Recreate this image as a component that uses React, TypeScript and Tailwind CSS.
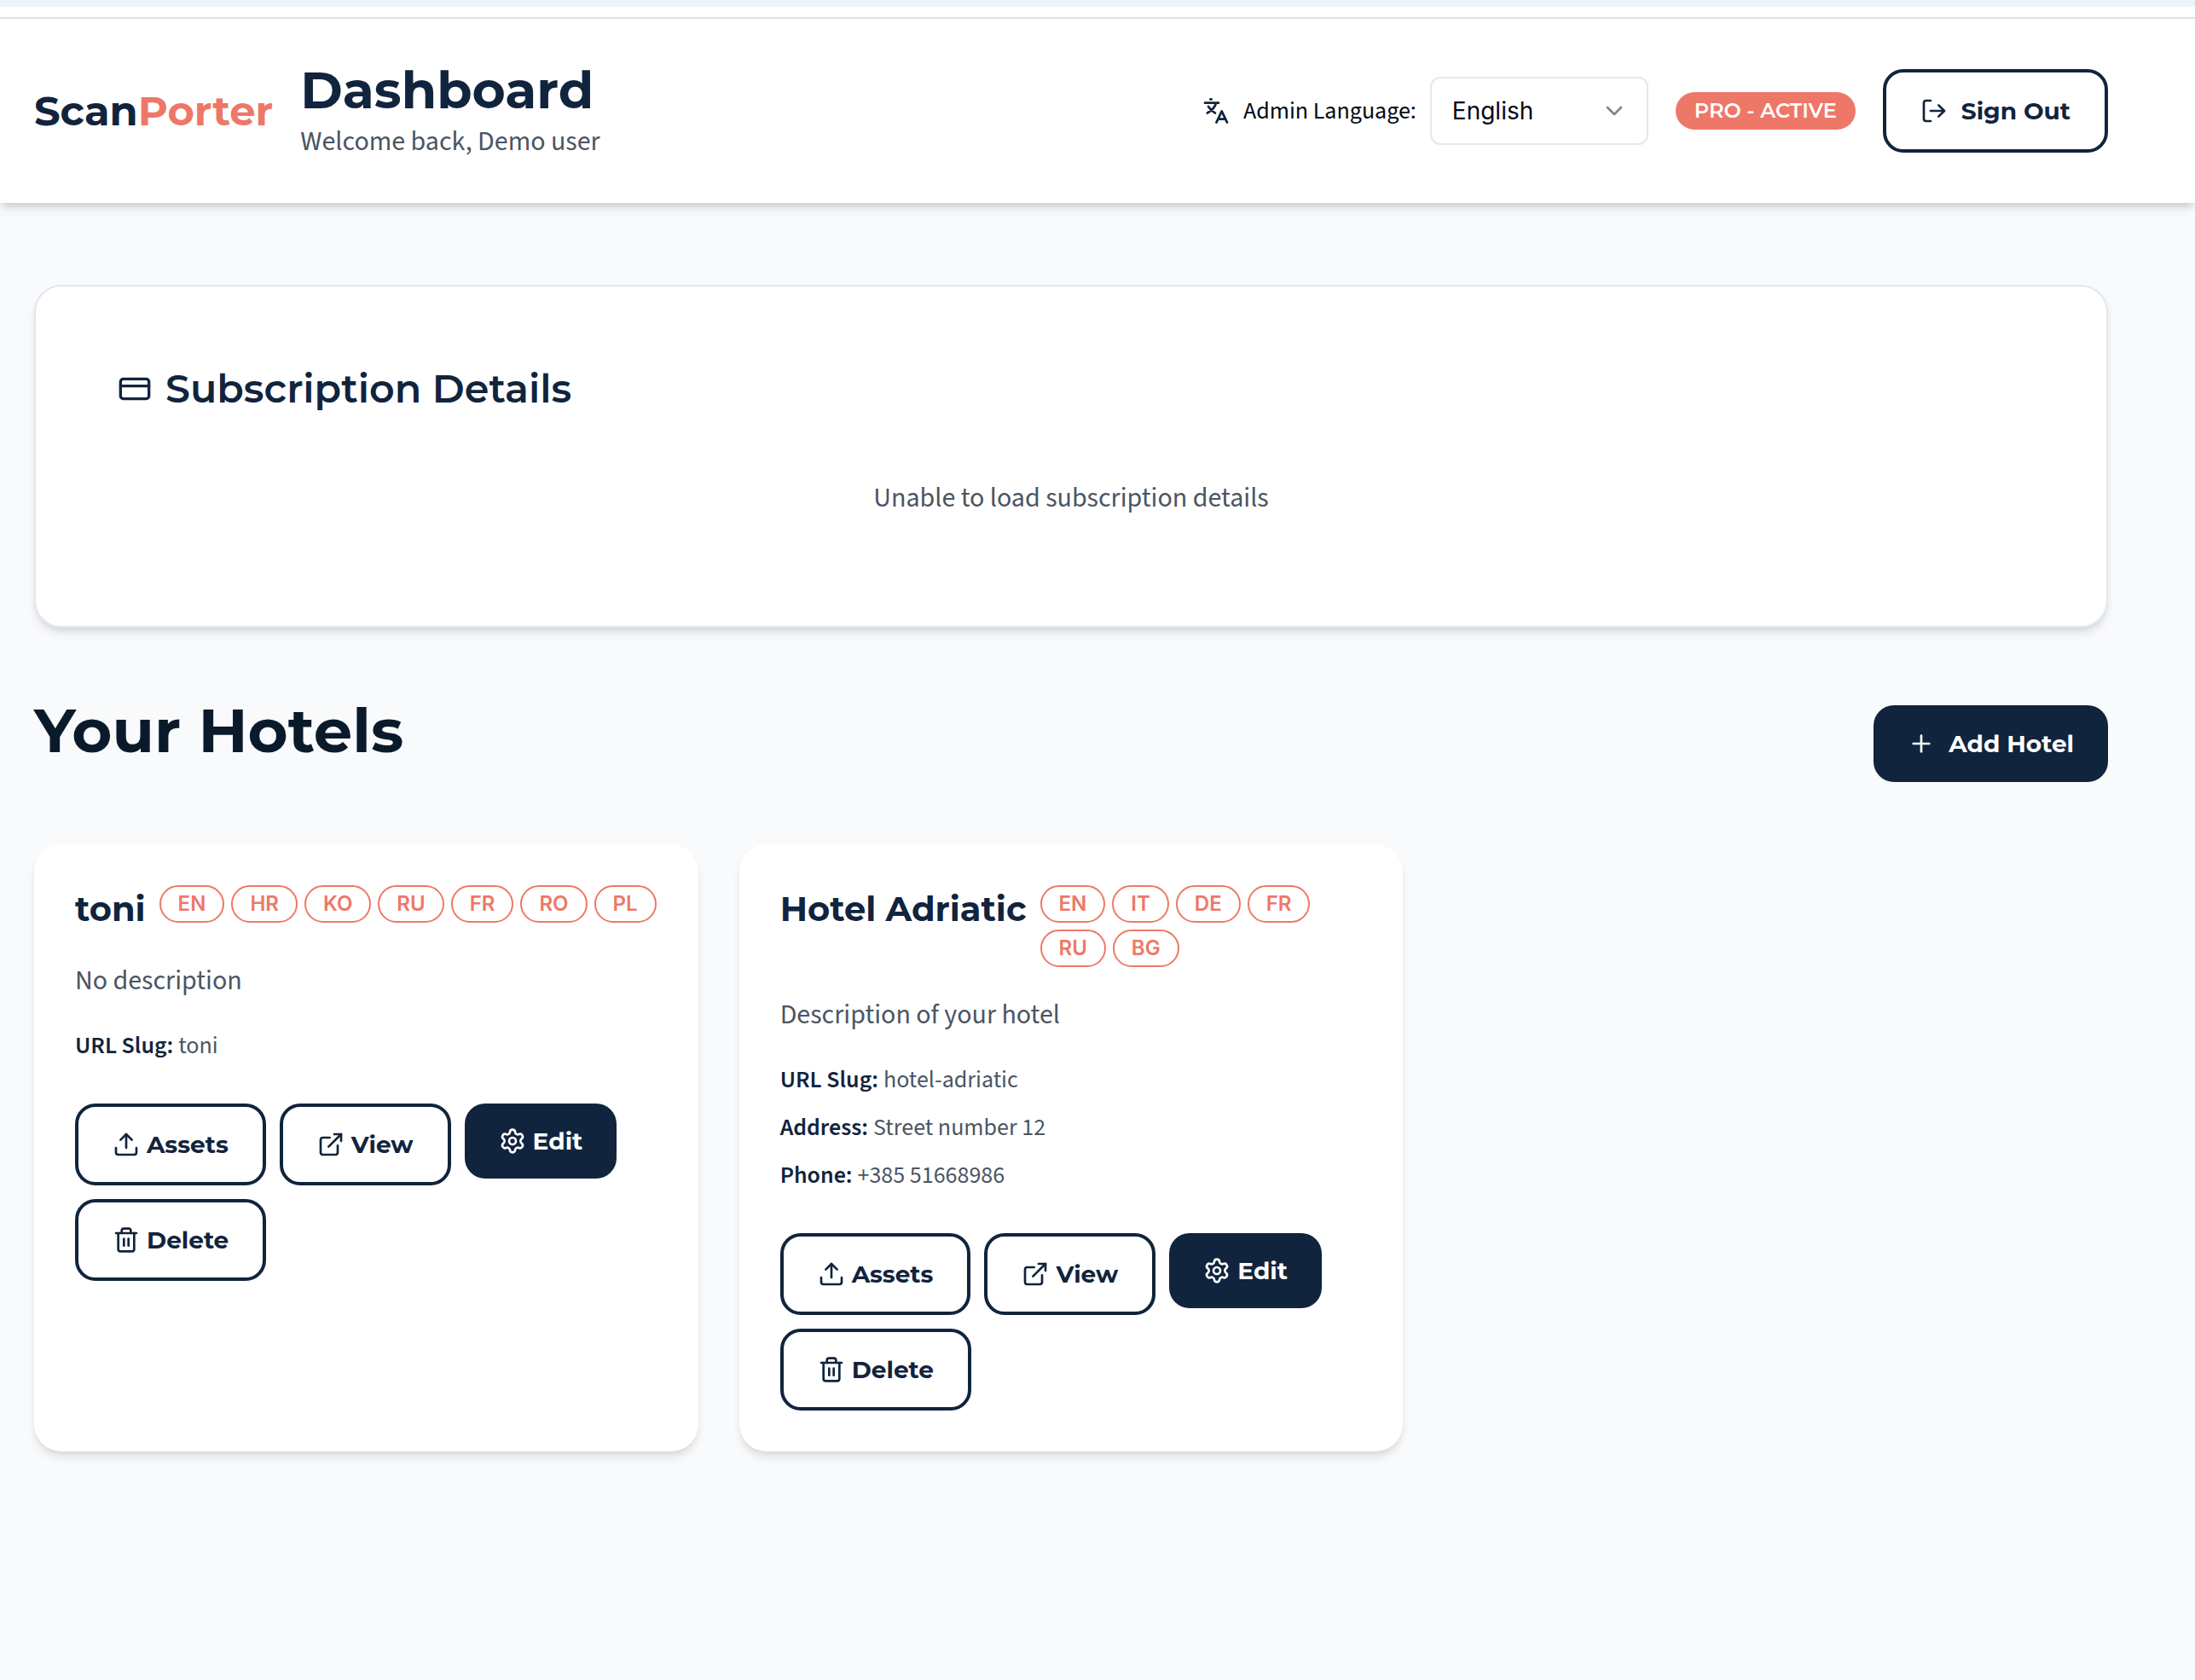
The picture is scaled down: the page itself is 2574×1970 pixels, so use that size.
import type { ReactNode } from "react";
import { ChevronDown, CreditCard, ExternalLink, LogOut, Plus, Settings, Trash2, Upload } from "lucide-react";

const heading = "font-['Montserrat','Inter',sans-serif]";
const cardShadow = "shadow-[0_8px_12px_-2px_rgba(0,0,0,0.1),0_4px_8px_-4px_rgba(0,0,0,0.1)]";

interface Hotel {
  name: string;
  languages: string[];
  description: string;
  details: { label: string; value: string }[];
}

const hotels: Hotel[] = [
  {
    name: "toni",
    languages: ["EN", "HR", "KO", "RU", "FR", "RO", "PL"],
    description: "No description",
    details: [{ label: "URL Slug:", value: "toni" }],
  },
  {
    name: "Hotel Adriatic",
    languages: ["EN", "IT", "DE", "FR", "RU", "BG"],
    description: "Description of your hotel",
    details: [
      { label: "URL Slug:", value: "hotel-adriatic" },
      { label: "Address:", value: "Street number 12" },
      { label: "Phone:", value: "+385 51668986" },
    ],
  },
];

function TranslateIcon() {
  return (
    <svg
      viewBox="0 0 32 32"
      fill="none"
      stroke="currentColor"
      strokeWidth="2.7"
      strokeLinecap="round"
      strokeLinejoin="round"
      className="size-8 shrink-0 text-[#11243d]"
      aria-hidden="true"
    >
      <path d="M9.4 2.4h1.2M3 6.7h16M16 7c-1.500 5-5.500 9-10.200 11.500M7 11c2 3.200 4.700 5.600 8 7.600" />
      <path d="m16.400 29.600 6.300-13.200 6.300 13.200M18.500 25.600h8.400" />
    </svg>
  );
}

interface ButtonProps {
  variant?: "outline" | "solid";
  className: string;
  children: ReactNode;
}

function Button({ variant = "outline", className, children }: ButtonProps) {
  const variantClass = variant === "solid" ? "bg-[#11243d] text-white" : "border-4 border-[#11243d] bg-white text-[#11243d]";

  return (
    <button
      type="button"
      className={`flex shrink-0 cursor-pointer items-center justify-center rounded-3xl px-10 text-[28px] font-bold whitespace-nowrap ${heading} ${variantClass} ${className}`}
    >
      {children}
    </button>
  );
}

function HotelCard({ name, languages, description, details }: Hotel) {
  return (
    <article className={`rounded-[32px] bg-white p-12 ${cardShadow}`}>
      <header className="flex items-start gap-4">
        <h3 className={`shrink-0 text-[40px] leading-[56px] font-bold text-[#11243d] ${heading}`}>{name}</h3>
        <ul className="flex flex-wrap gap-2">
          {languages.map((language) => (
            <li
              key={language}
              className="flex h-11 items-center rounded-full border-2 border-[#ed7868] px-5 font-['Inter',sans-serif] text-[24px] font-semibold text-[#ed7868]"
            >
              {language}
            </li>
          ))}
        </ul>
      </header>
      <p className="mt-8 text-[32px] leading-[48px] text-[#4b5563]">{description}</p>
      <dl className="mt-8 flex flex-col gap-4 text-[28px] leading-[40px]">
        {details.map((detail) => (
          <div key={detail.label} className="flex gap-[6px]">
            <dt className="font-semibold text-[#11243d]">{detail.label}</dt>
            <dd className="text-[#4b5563]">{detail.value}</dd>
          </div>
        ))}
      </dl>
      <div className="mt-12 flex flex-wrap items-start gap-4">
        <Button className="h-24 gap-2">
          <Upload size={32} />
          Assets
        </Button>
        <Button className="h-24 gap-2">
          <ExternalLink size={32} />
          View
        </Button>
        <Button variant="solid" className="h-[88px] gap-2">
          <Settings size={32} />
          Edit
        </Button>
        <Button className="h-24 gap-2">
          <Trash2 size={32} />
          Delete
        </Button>
      </div>
    </article>
  );
}

export default function App() {
  return (
    <div className="min-h-screen bg-[#f9fafc] font-['Source_Sans_3','Source_Sans_Pro','Noto_Sans_CJK_SC',sans-serif] text-[#020817]">
      <div className="h-2 bg-[#eef2fb]" />
      <div className="h-[14px] border-b-2 border-[#e1e3e1] bg-white" />

      <header className="bg-white py-12 pr-[102px] pl-10 shadow-[0_8px_12px_-2px_rgba(0,0,0,0.12),0_4px_8px_-2px_rgba(0,0,0,0.1)]">
        <div className="flex items-center justify-between">
          <div className="flex items-center gap-8">
            <a href="#" className={`text-[48px] leading-[60px] font-bold text-[#11243d] ${heading}`}>
              Scan<span className="text-[#ed7868]">Porter</span>
            </a>
            <div>
              <h1 className={`text-[60px] leading-[72px] font-bold text-[#11243d] ${heading}`}>Dashboard</h1>
              <p className="text-[32px] leading-[48px] text-[#4b5563]">Welcome back, Demo user</p>
            </div>
          </div>

          <div className="flex items-center gap-8">
            <div className="flex items-center gap-4">
              <TranslateIcon />
              <label htmlFor="admin-language" className="text-[28px] leading-[40px]">
                Admin Language:
              </label>
              <div className="relative">
                <select
                  id="admin-language"
                  className="h-20 w-64 appearance-none rounded-xl border-2 border-[#e2e8f0] bg-white px-6 font-['Inter',sans-serif] text-[28px]"
                >
                  <option>English</option>
                </select>
                <ChevronDown size={32} className="pointer-events-none absolute top-6 right-6 text-[#81848b]" />
              </div>
            </div>
            <span className={`flex h-11 items-center rounded-full bg-[#ed7868] px-[22px] text-[24px] font-semibold text-white ${heading}`}>
              PRO - ACTIVE
            </span>
            <Button className="h-[98px] gap-4">
              <LogOut size={32} />
              Sign Out
            </Button>
          </div>
        </div>
      </header>

      <main className="pt-24 pr-[102px] pb-24 pl-10">
        <section className={`rounded-[32px] border-2 border-[#e2e8f0] bg-white px-24 pt-24 pb-[94px] ${cardShadow}`}>
          <h2 className={`flex items-center gap-4 text-[46px] leading-[48px] font-semibold text-[#11243d] ${heading}`}>
            <CreditCard size={40} />
            Subscription Details
          </h2>
          <p className="mt-12 py-8 text-center text-[32px] leading-[48px] text-[#4b5563]">
            Unable to load subscription details
          </p>
        </section>

        <section className="mt-20">
          <div className="flex h-28 items-center justify-between">
            <h2 className={`self-start text-[72px] leading-[80px] font-bold text-[#0b1a2b] ${heading}`}>Your Hotels</h2>
            <Button variant="solid" className="h-[90px] gap-4">
              <Plus size={32} />
              Add Hotel
            </Button>
          </div>
          <div className="mt-[62px] grid grid-cols-3 gap-12">
            {hotels.map((hotel) => (
              <HotelCard key={hotel.name} {...hotel} />
            ))}
          </div>
        </section>
      </main>
    </div>
  );
}
